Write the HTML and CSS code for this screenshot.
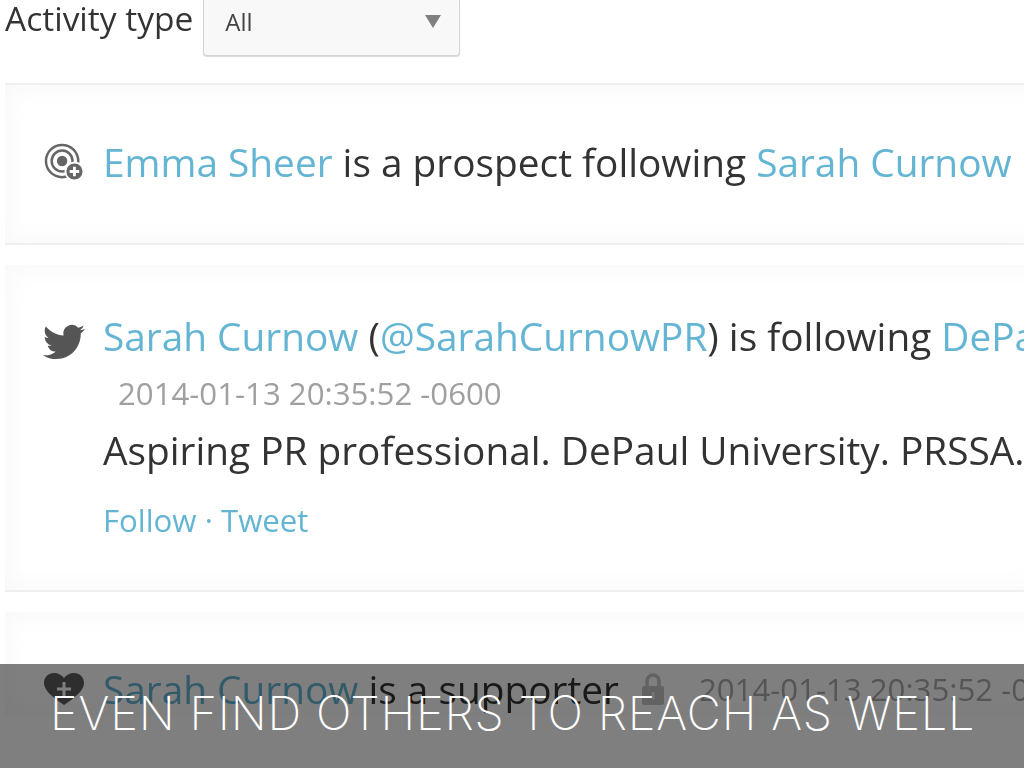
FILE: index.html
```html
<!DOCTYPE html>
<html lang="en">
<head>
    <meta charset="UTF-8">
    <title>Even find others to reach as well</title>
    <link rel="stylesheet" href="styles.css">
</head>
<body>
    <div class="slide">
        <div class="page">
            <div class="filter">
                <span class="filter-label">Activity type</span>
                <div class="select">
                    <span>All</span>
                    <span class="select-arrow"></span>
                </div>
            </div>

            <div class="activity activity-first">
                <div class="line">
                    <svg class="icon" viewBox="0 0 42 40">
                        <circle cx="19" cy="19" r="17" fill="none" stroke="#666" stroke-width="2.6"/>
                        <circle cx="19" cy="19" r="11" fill="none" stroke="#666" stroke-width="2.6"/>
                        <circle cx="19" cy="19" r="5.5" fill="#666"/>
                        <circle cx="32" cy="30" r="9.5" fill="#666" stroke="#fff" stroke-width="2"/>
                        <path d="M32 25v10M27 30h10" stroke="#fff" stroke-width="3"/>
                    </svg>
                    <p><a>Emma Sheer</a> is a prospect following <a>Sarah Curnow</a></p>
                </div>
            </div>

            <div class="activity activity-tweet">
                <div class="line">
                    <svg class="icon icon-bird" viewBox="0 2 24 20">
                        <path fill="#555" d="M23.953 4.57a10 10 0 01-2.825.775 4.958 4.958 0 002.163-2.723c-.951.555-2.005.959-3.127 1.184a4.92 4.92 0 00-8.384 4.482C7.69 8.095 4.067 6.13 1.64 3.162a4.822 4.822 0 00-.666 2.475c0 1.71.87 3.213 2.188 4.096a4.904 4.904 0 01-2.228-.616v.06a4.923 4.923 0 003.946 4.827 4.996 4.996 0 01-2.212.085 4.936 4.936 0 004.604 3.417 9.867 9.867 0 01-6.102 2.105c-.39 0-.779-.023-1.17-.067a13.995 13.995 0 007.557 2.209c9.053 0 13.998-7.496 13.998-13.985 0-.21 0-.42-.015-.63A9.935 9.935 0 0024 4.59z"/>
                    </svg>
                    <p><a>Sarah Curnow</a> (<a>@SarahCurnowPR</a>) is following <a>DePaul University</a></p>
                </div>
                <div class="timestamp">2014-01-13 20:35:52 -0600</div>
                <p class="bio">Aspiring PR professional. DePaul University. PRSSA. Chicago</p>
                <div class="actions"><a>Follow</a> <span class="dot">·</span> <a>Tweet</a></div>
            </div>

            <div class="activity activity-last">
                <div class="line">
                    <svg class="icon" viewBox="0 0 42 32">
                        <path fill="#5c5c5c" d="M21 32C9 24 1 17 1 10 1 4 5.500 0 11 0c4 0 8 2 10 5 2-3 6-5 10-5 5.500 0 10 4 10 10 0 7-8 14-20 22z"/>
                        <path d="M21 9v14M14 16h14" stroke="#fff" stroke-width="3"/>
                    </svg>
                    <p><a>Sarah Curnow</a> is a supporter</p>
                    <svg class="lock" viewBox="0 0 22 32">
                        <path fill="none" stroke="#c4c4c4" stroke-width="3.500" d="M5 14V8a6 6 0 0 1 12 0v6"/>
                        <rect x="0" y="13" width="22" height="19" rx="2" fill="#c4c4c4"/>
                        <rect x="10" y="19" width="2.500" height="7" fill="#eee"/>
                    </svg>
                    <span class="timestamp-inline">2014-01-13 20:35:52 -0600</span>
                </div>
            </div>
        </div>

        <div class="caption">EVEN FIND OTHERS TO REACH AS WELL</div>
    </div>
</body>
</html>
```

FILE: styles.css
```css
html, body {
    margin: 0;
    padding: 0;
}
.slide {
    position: relative;
    width: 1024px;
    height: 768px;
    overflow: hidden;
    background-color: #fff;
    font-family: "Open Sans", sans-serif;
    color: #333;
}
.page {
    filter: blur(0.5px);
}
a {
    color: #64b5d3;
}
p {
    margin: 0;
}
.filter {
    display: flex;
    align-items: flex-start;
    gap: 10px;
    height: 83px;
    padding-left: 5px;
    box-sizing: border-box;
}
.filter-label {
    font-size: 33.500px;
    line-height: 36px;
}
.select {
    display: flex;
    justify-content: space-between;
    width: 257px;
    height: 56px;
    padding: 7px 18px 0 21px;
    box-sizing: border-box;
    border: 1px solid #d4d4d4;
    border-top: 0;
    border-radius: 0 0 4px 4px;
    background-color: #f8f8f8;
    box-shadow: 0 1px 1px rgba(0, 0, 0, 0.15);
    font-size: 24px;
    line-height: 30px;
    color: #444;
}
.select-arrow {
    width: 0;
    height: 0;
    margin-top: 8px;
    border-left: 8px solid transparent;
    border-right: 8px solid transparent;
    border-top: 13px solid #808080;
}
.activity {
    margin-left: 5px;
    padding-left: 38px;
    box-shadow: inset 20px 20px 30px -20px #f7f7f7, inset 0 -20px 30px -20px #f7f7f7;
    white-space: nowrap;
}
.activity-first {
    height: 162px;
    box-sizing: border-box;
    padding-top: 51px;
    border-top: 2px solid #efefef;
    border-bottom: 2px solid #efefef;
}
.activity-tweet {
    height: 327px;
    margin-top: 20px;
    box-sizing: border-box;
    padding-top: 45px;
    border-bottom: 2px solid #efefef;
}
.activity-last {
    margin-top: 20px;
    padding-top: 51px;
}
.line {
    display: flex;
    align-items: center;
    font-size: 38.800px;
    line-height: 52px;
}
.icon {
    flex: none;
    width: 42px;
    height: 38px;
    margin-right: 18px;
}
.icon-bird {
    margin-top: 12px;
}
.lock {
    flex: none;
    width: 22px;
    height: 32px;
    margin: 0 35px 0 23px;
}
.timestamp-inline {
    font-size: 31.200px;
    color: #aaa;
}
.timestamp {
    margin: 10px 0 0 75px;
    font-size: 31.200px;
    line-height: 42px;
    color: #a0a0a0;
}
.bio {
    margin: 10px 0 0 60px;
    font-size: 38.800px;
    line-height: 52px;
}
.actions {
    margin: 23px 0 0 60px;
    font-size: 31.200px;
    line-height: 42px;
}
.dot {
    color: #64b5d3;
}
.caption {
    position: absolute;
    left: 0;
    right: 0;
    bottom: 0;
    height: 104px;
    padding: 21px 0 0 50px;
    box-sizing: border-box;
    background-color: rgba(0, 0, 0, 0.5);
    font-family: Inter, sans-serif;
    font-weight: 200;
    font-size: 47px;
    line-height: 56px;
    letter-spacing: 0.800px;
    color: #fff;
    white-space: nowrap;
}
```
